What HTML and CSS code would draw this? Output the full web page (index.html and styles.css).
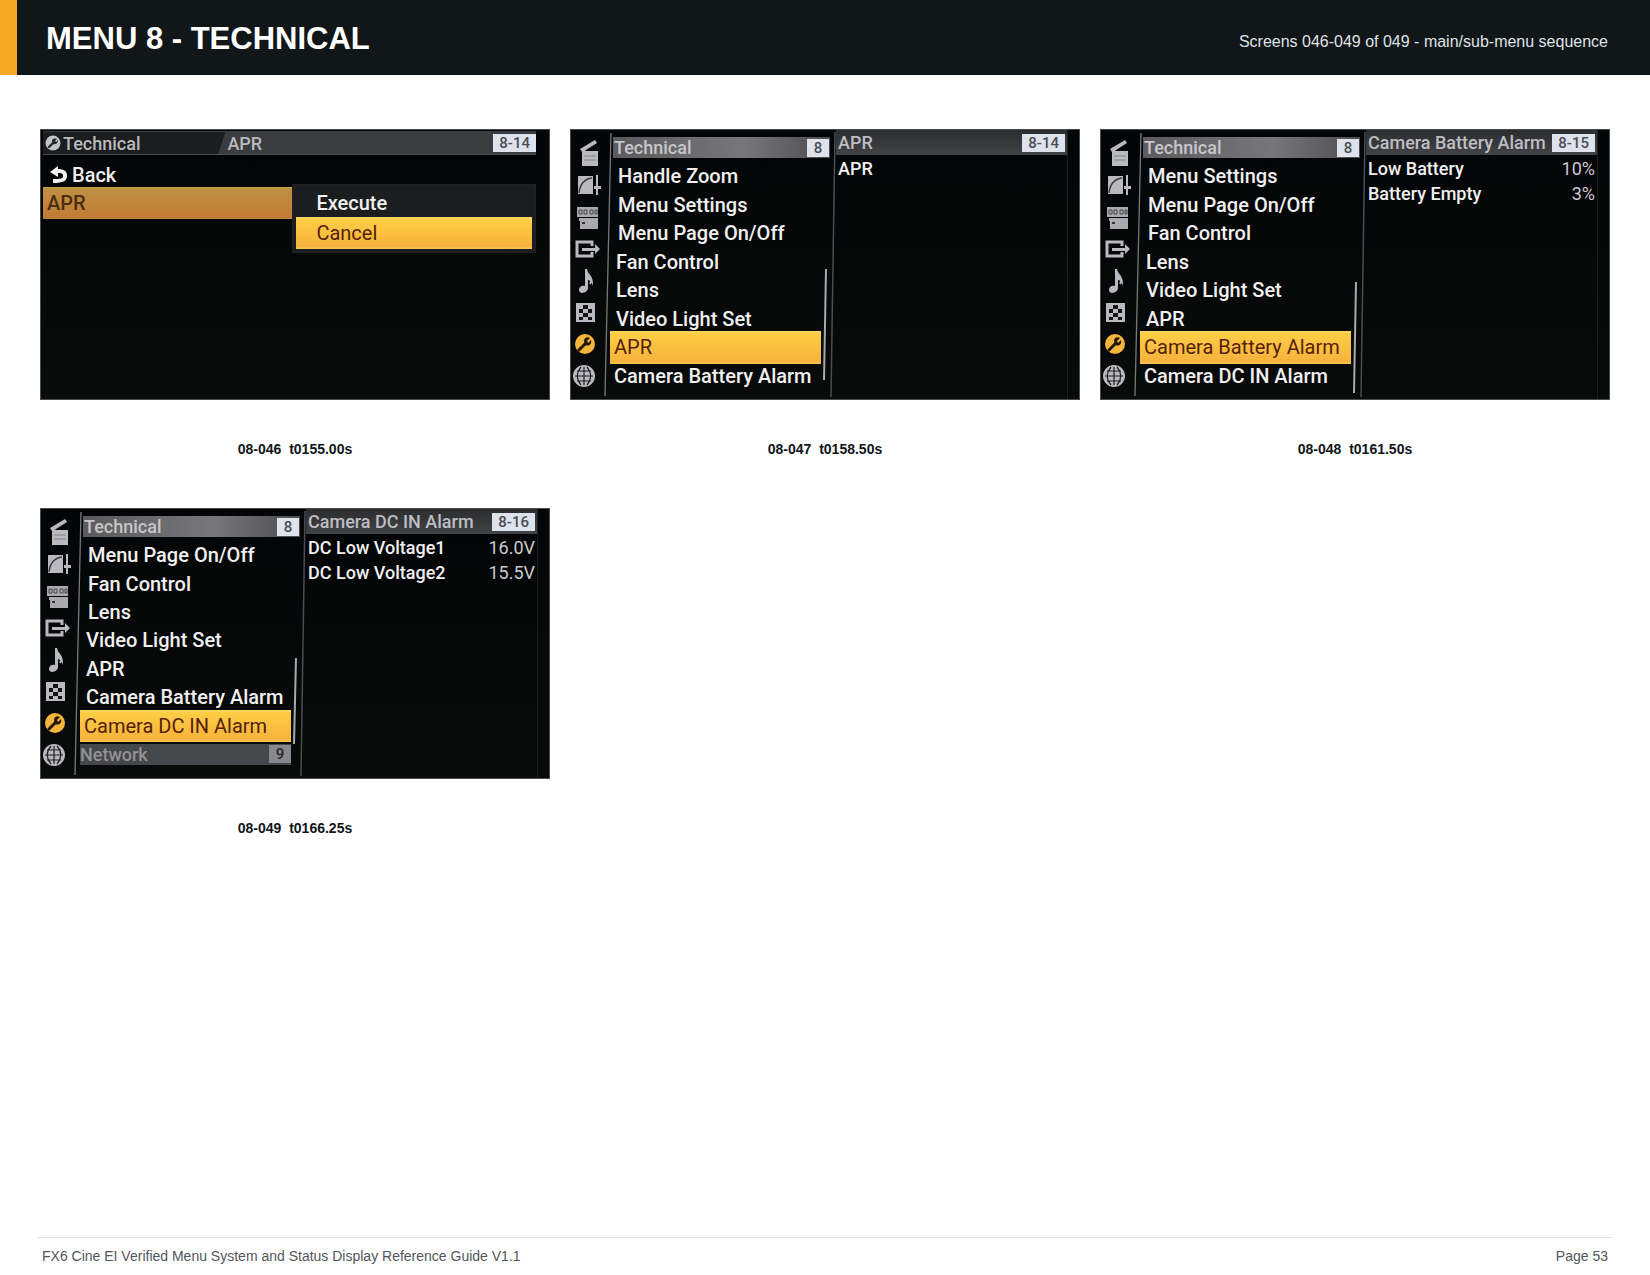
FILE: index.html
```html
<!DOCTYPE html>
<html lang="en">
<head>
    <meta charset="UTF-8">
    <meta name="viewport" content="width=device-width, initial-scale=1.0">
    <title>Menu 8 - Technical</title>
    <link rel="stylesheet" href="styles.css">
</head>
<body>
    <!-- Shared icons -->
    <svg class="sprite" aria-hidden="true">
        <symbol id="rail" viewBox="0 0 42 269">
            <path d="M40 3 L34 266" stroke="#77787c" stroke-width="1.3" fill="none"/>
            <!-- clapper -->
            <g fill="#b9b9bf">
                <path d="M9 19 L24 10 L26 13 L15 20 L14 21 H27 V36 H11 V22 Z"/>
                <path d="M13 26 H25 M13 30 H25" stroke="#85858b" stroke-width="1"/>
            </g>
            <!-- gamma curve -->
            <path d="M7 46 H22 V64 H7 Z" fill="#b9b9bf"/>
            <path d="M8 63 C9 54 13 49 21 48" stroke="#3c3c40" stroke-width="1.5" fill="none"/>
            <path d="M26 45 V65" stroke="#b9b9bf" stroke-width="2"/>
            <path d="M23 56 H30 V59 H23 Z" fill="#b9b9bf"/>
            <!-- timecode -->
            <path d="M6 77 H27 V87 H6 Z M8 88 H27 V99 H9 V91 H8 Z" fill="#a9a9af"/>
            <path d="M8 80 h3 v4 h-3 Z M13 80 h3 v4 h-3 Z M19 80 h3 v4 h-3 Z M24 80 h2 v4 h-2 Z" stroke="#46464a" stroke-width="1" fill="none"/>
            <path d="M11 92 h3 v2 h-3 Z" fill="#333"/>
            <!-- output -->
            <path d="M6 112 H21 V126 H6 Z" stroke="#b9b9bf" stroke-width="3" fill="none"/>
            <path d="M19 116 H23 V122 H19 Z" fill="#050607"/>
            <path d="M11 118 H24 V114 L29 119 L24 124 V121 H11 Z" fill="#b9b9bf"/>
            <!-- note -->
            <path d="M16 139 C17 145 23 147 22 156 C21 152 19 150 17 150 V158 C17 163 8 165 8 160 C8 156 12 155 14 156 V139 Z" fill="#b9b9bf"/>
            <path d="M17 144 C20 147 22 150 19 154" stroke="#b9b9bf" stroke-width="2" fill="none"/>
            <!-- checker -->
            <path d="M5 173 H24 V192 H5 Z" fill="#b9b9bf"/>
            <path d="M12 175 h5 v4 h-5 Z M8 179 h4 v4 h-4 Z M17 179 h4 v4 h-4 Z M12 183 h5 v4 h-5 Z M8 187 h4 v3 h-4 Z M17 187 h4 v3 h-4 Z" fill="#141416"/>
            <!-- wrench -->
            <circle cx="14" cy="214" r="10" fill="#f4b53c"/>
            <path d="M8 220 L15 213" stroke="#241703" stroke-width="3" stroke-linecap="round"/>
            <path d="M13 211 C13 208 16 206 19 208 L16 211 L17 213 L20 210 C21 213 19 217 14 215 Z" fill="#241703"/>
            <!-- globe -->
            <circle cx="13" cy="246" r="11" fill="#b9b9bf"/>
            <path d="M13 237 V255 M4 246 H22 M6 241 H20 M6 251 H20 M10 237 C5 243 5 249 10 255 M16 237 C21 243 21 249 16 255" stroke="#202024" stroke-width="1.2" fill="none"/>
        </symbol>
        <symbol id="wrench" viewBox="0 0 16 16">
            <circle cx="8" cy="8" r="7.5" fill="#c3c4c8"/>
            <path d="M4 12 L9 7" stroke="#26272a" stroke-width="2.4" stroke-linecap="round"/>
            <path d="M7 6 C7 4 9 3 12 4 L10 6 L11 7 L13 5 C13 8 11 10 8 9 Z" fill="#26272a"/>
        </symbol>
        <symbol id="back" viewBox="0 0 18 18">
            <path d="M0 6 L8 0 V3 C14 3 17 5 17 10 C17 15 13 17 3 17 V13 C10 13 13 13 13 10 C13 7 11 7 8 7 V11 Z" fill="#f2f2f2"/>
        </symbol>
        <symbol id="divider" viewBox="0 0 6 269" preserveAspectRatio="none">
            <path d="M5 2 L1 267" stroke="#4c4d50" stroke-width="1.5" fill="none"/>
        </symbol>
    </svg>

    <header class="header">
        <h1>MENU 8 - TECHNICAL</h1>
        <p>Screens 046-049 of 049 - main/sub-menu sequence</p>
    </header>

    <main class="gallery">
        <figure>
            <div class="screen submenu">
                <div class="path">
                    <div class="path-root"><svg class="path-icon"><use href="#wrench"/></svg>Technical</div>
                    <div class="path-page">APR <span class="badge">8-14</span></div>
                </div>
                <button class="back"><svg class="back-icon"><use href="#back"/></svg>Back</button>
                <div class="choice">
                    <button class="current">APR</button>
                    <div class="popup">
                        <button>Execute</button>
                        <button class="selected">Cancel</button>
                    </div>
                </div>
            </div>
            <figcaption>08-046&nbsp; t0155.00s</figcaption>
        </figure>

        <figure>
            <div class="screen">
                <svg class="rail"><use href="#rail"/></svg>
                <div class="menu">
                    <div class="menu-title">Technical <span class="badge">8</span></div>
                    <div class="items">
                        <button>Handle Zoom</button>
                        <button>Menu Settings</button>
                        <button>Menu Page On/Off</button>
                        <button>Fan Control</button>
                        <button>Lens</button>
                        <button>Video Light Set</button>
                        <button class="selected">APR</button>
                        <button>Camera Battery Alarm</button>
                        <svg class="scrollbar" viewBox="0 0 6 228" preserveAspectRatio="none"><path d="M4 107 L2 218"/></svg>
                    </div>
                </div>
                <svg class="divider"><use href="#divider"/></svg>
                <div class="pane">
                    <div class="pane-title">APR <span class="badge">8-14</span></div>
                    <table>
                        <tr><th>APR</th><td></td></tr>
                    </table>
                </div>
            </div>
            <figcaption>08-047&nbsp; t0158.50s</figcaption>
        </figure>

        <figure>
            <div class="screen">
                <svg class="rail"><use href="#rail"/></svg>
                <div class="menu">
                    <div class="menu-title">Technical <span class="badge">8</span></div>
                    <div class="items">
                        <button>Menu Settings</button>
                        <button>Menu Page On/Off</button>
                        <button>Fan Control</button>
                        <button>Lens</button>
                        <button>Video Light Set</button>
                        <button>APR</button>
                        <button class="selected">Camera Battery Alarm</button>
                        <button>Camera DC IN Alarm</button>
                        <svg class="scrollbar" viewBox="0 0 6 228" preserveAspectRatio="none"><path d="M4 120 L2 231"/></svg>
                    </div>
                </div>
                <svg class="divider"><use href="#divider"/></svg>
                <div class="pane">
                    <div class="pane-title">Camera Battery Alarm <span class="badge">8-15</span></div>
                    <table>
                        <tr><th>Low Battery</th><td>10%</td></tr>
                        <tr><th>Battery Empty</th><td>3%</td></tr>
                    </table>
                </div>
            </div>
            <figcaption>08-048&nbsp; t0161.50s</figcaption>
        </figure>

        <figure>
            <div class="screen">
                <svg class="rail"><use href="#rail"/></svg>
                <div class="menu">
                    <div class="menu-title">Technical <span class="badge">8</span></div>
                    <div class="items">
                        <button>Menu Page On/Off</button>
                        <button>Fan Control</button>
                        <button>Lens</button>
                        <button>Video Light Set</button>
                        <button>APR</button>
                        <button>Camera Battery Alarm</button>
                        <button class="selected">Camera DC IN Alarm</button>
                        <div class="next-menu">Network <span class="badge">9</span></div>
                        <svg class="scrollbar" viewBox="0 0 6 228" preserveAspectRatio="none"><path d="M4 117 L2 203"/></svg>
                    </div>
                </div>
                <svg class="divider"><use href="#divider"/></svg>
                <div class="pane">
                    <div class="pane-title">Camera DC IN Alarm <span class="badge">8-16</span></div>
                    <table>
                        <tr><th>DC Low Voltage1</th><td>16.0V</td></tr>
                        <tr><th>DC Low Voltage2</th><td>15.5V</td></tr>
                    </table>
                </div>
            </div>
            <figcaption>08-049&nbsp; t0166.25s</figcaption>
        </figure>
    </main>

    <footer class="footer">
        <span>FX6 Cine EI Verified Menu System and Status Display Reference Guide V1.1</span>
        <span>Page 53</span>
    </footer>
</body>
</html>
```
FILE: styles.css
```css
* {
    box-sizing: border-box;
}
body {
    margin: 0;
    min-height: 100vh;
    display: flex;
    flex-direction: column;
    font-family: "Liberation Sans", Arial, sans-serif;
    background-color: #fff;
    color: #111619;
}
.sprite {
    display: none;
}
.header {
    display: flex;
    justify-content: space-between;
    align-items: center;
    height: 75px;
    padding: 2px 42px 0 29px;
    background-color: #111619;
    border-left: 17px solid #f7a723;
}
.header h1 {
    margin: 0;
    font-size: 31px;
    color: #fff;
}
.header p {
    margin: 0;
    padding-top: 7px;
    font-size: 16px;
    color: #dfe3e6;
}

/* Screens */
.gallery {
    flex: 1;
    display: grid;
    grid-template-columns: repeat(3, 1fr);
    align-content: start;
    gap: 49px 20px;
    padding: 54px 40px;
}
figure {
    margin: 0;
    min-width: 0;
}
figcaption {
    margin-top: 39px;
    font-size: 14px;
    font-weight: bold;
    line-height: 20px;
    text-align: center;
}
.screen {
    display: flex;
    aspect-ratio: 510 / 271;
    padding-right: 11px;
    border: 1px solid #4a4b4d;
    background: linear-gradient(#040506, #090a0a);
    font-family: Roboto, "Liberation Sans", sans-serif;
    font-size: 20px;
    font-weight: 500;
    color: #f0f0f0;
    overflow: hidden;
}
.screen button {
    display: flex;
    align-items: center;
    margin: 0;
    padding: 0;
    border: none;
    background: none;
    font: inherit;
    color: inherit;
    text-align: left;
    white-space: nowrap;
}
.screen .selected {
    background: linear-gradient(#ffce45, #f6b23c);
    box-shadow: 0 -2px 0 #fbd25a, 0 2px 0 #f6c04c;
    color: #54210a;
    font-weight: 400;
}
.badge {
    min-width: 22px;
    padding: 0 6px;
    background-color: #dde2ec;
    font-size: 15px;
    line-height: 18px;
    text-align: center;
    color: #4b4d54;
}

/* Main menu */
.rail {
    flex: 0 0 42px;
    height: 100%;
    margin-right: -3px;
}
.menu {
    flex: 220;
    display: flex;
    flex-direction: column;
    min-width: 0;
    padding: 7px 0 9px;
}
.menu-title,
.next-menu {
    display: flex;
    justify-content: space-between;
    align-items: center;
    height: 21px;
    font-size: 18px;
    white-space: nowrap;
}
.menu-title {
    margin-left: 3px;
    padding: 0 1px 0 1px;
    background: linear-gradient(90deg, #5b5b5e, #77777a 60%, #4c4c4f);
    color: #c6c6ca;
}
.items {
    flex: 1;
    display: flex;
    flex-direction: column;
    position: relative;
    margin: 4px 9px 0 0;
}
.items button {
    flex: 1;
    padding-left: 4px;
}
/* rows lean left like the rail does */
.items button:nth-child(-n+6) {
    padding-left: 6px;
}
.items button:nth-child(-n+3) {
    padding-left: 8px;
}
.next-menu {
    margin: 4px 0;
    background-color: #46474a;
    color: #929296;
}
.next-menu .badge {
    background-color: #88898e;
    color: #242529;
}
.scrollbar {
    position: absolute;
    top: 0;
    right: -7px;
    width: 6px;
    height: 100%;
    overflow: visible;
}
.scrollbar path {
    fill: none;
    stroke: #a9a9ad;
    stroke-width: 2;
}
.divider {
    flex: 0 0 6px;
    height: 100%;
}

/* Detail pane */
.pane {
    flex: 231;
    min-width: 0;
    border-right: 1px solid #1d1e20;
    font-size: 18px;
}
.pane-title {
    display: flex;
    justify-content: space-between;
    align-items: center;
    height: 25px;
    padding: 0 2px;
    background: linear-gradient(#2c2d2f, #424346);
    color: #bdbec3;
    white-space: nowrap;
}
.pane table {
    width: 100%;
    padding: 1px 2px;
    border-spacing: 0;
}
.pane th,
.pane td {
    height: 25px;
    padding: 0;
    font-weight: 500;
    text-align: left;
    white-space: nowrap;
}
.pane td {
    font-weight: 400;
    text-align: right;
    color: #c9cace;
}

/* Submenu with popup */
.submenu {
    flex-direction: column;
    padding: 1px 13px 0 2px;
}
.path {
    display: flex;
    height: 24px;
    border-top: 1px solid #3a3c3f;
    border-bottom: 1px solid #4a4c4f;
    background-color: #3a3c3f;
    font-size: 18px;
    color: #b9babe;
}
.path-root {
    flex: 0 0 37%;
    display: flex;
    align-items: center;
    gap: 2px;
    padding-left: 2px;
    background-color: #1c1d1f;
    clip-path: polygon(0 0, 100% 0, 96% 100%, 0 100%);
}
.path-icon {
    width: 16px;
    height: 16px;
}
.path-page {
    flex: 1;
    display: flex;
    justify-content: space-between;
    align-items: center;
    padding-left: 2px;
}
.screen .back {
    gap: 4px;
    height: 28px;
    margin-top: 6px;
    padding-left: 7px;
}
.back-icon {
    width: 18px;
    height: 18px;
}
.choice {
    display: flex;
    align-items: flex-start;
    margin-top: -5px;
}
.screen .current {
    flex: 252;
    height: 32px;
    margin-top: 3px;
    padding-left: 4px;
    border-top: 1px solid #c9a04a;
    border-bottom: 1px solid #b5803c;
    background: linear-gradient(#bf9044, #c27c34);
    color: #4c2e12;
}
.popup {
    flex: 242;
    padding: 4px 3px 3px;
    border: 1px solid #1f2122;
    background-color: #1b1d1f;
}
.screen .popup button {
    width: 100%;
    height: 28px;
    padding-left: 20px;
}
.screen .popup .selected {
    margin: 2px 0;
}

/* Footer */
.footer {
    display: flex;
    justify-content: space-between;
    margin: 0 38px;
    padding: 8px 4px 9px;
    border-top: 1px solid #dfe1e2;
    font-size: 14px;
    line-height: 20px;
    color: #51575a;
}
```
